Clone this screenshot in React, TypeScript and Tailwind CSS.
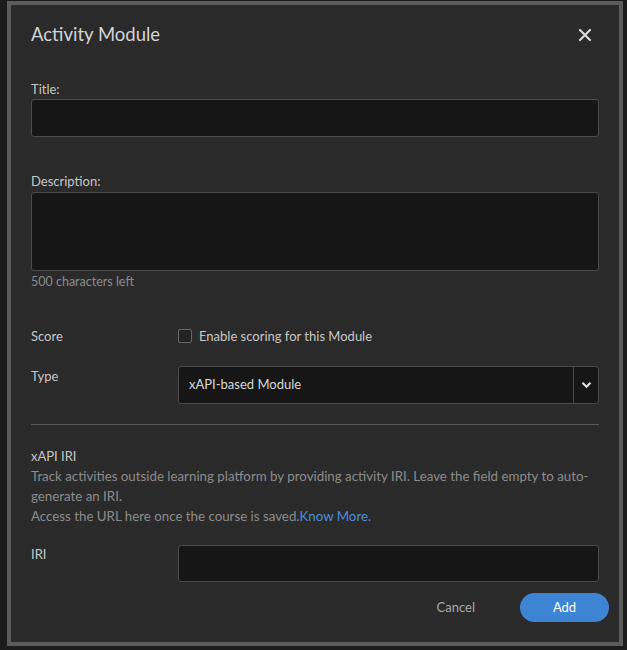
import React, { useState } from 'react';

const font = { fontFamily: 'Lato, "Noto Sans", sans-serif' };

const ActivityModuleDialog = () => {
  const [description, setDescription] = useState('');
  const [scoring, setScoring] = useState(false);

  return (
    <div className="min-h-[650px] w-[627px] bg-[#1b1b1b] pl-[7px] pt-px" style={font}>
      <div className="flex h-[645px] w-[616px] flex-col border-4 border-[#5b5b5b] bg-[#2a2a2a] px-5">
        {/* header */}
        <div className="mt-[16px] flex h-[28px] items-center justify-between">
          <h2 className="text-[18.5px] text-[#d4d4d4]">Activity Module</h2>
          <button className="mr-[7px] text-[#d8d8d8]">
            <svg width="14" height="14" viewBox="0 0 14 14">
              <path d="M2 2 L12 12 M12 2 L2 12" stroke="currentColor" strokeWidth="2.2" strokeLinecap="round" />
            </svg>
          </button>
        </div>

        {/* title */}
        <label className="mt-[32px] text-[13px] leading-[16px] text-[#c6c6c6]">Title:</label>
        <input className="mt-[2px] h-[38px] w-full rounded-[3px] border border-[#4b4b4b] bg-[#161616] px-3 text-[13px] text-[#ddd] outline-none" />

        {/* description */}
        <label className="mt-[36px] text-[13px] leading-[16px] text-[#c6c6c6]">Description:</label>
        <textarea
          value={description}
          onChange={(e) => setDescription(e.target.value.slice(0, 500))}
          className="mt-[3px] h-[79px] w-full resize-none rounded-[3px] border border-[#4b4b4b] bg-[#161616] px-3 py-2 text-[13px] text-[#ddd] outline-none"
        />
        <p className="mt-[3px] text-[12.5px] leading-[16px] text-[#8a8a8a]">{500 - description.length} characters left</p>

        {/* score */}
        <div className="mt-[38px] flex items-center text-[13px] leading-[16px]">
          <span className="w-[147px] text-[#c6c6c6]">Score</span>
          <label className="flex items-center gap-[7px] text-[#c6c6c6]">
            <span
              onClick={() => setScoring(!scoring)}
              className="h-[14px] w-[14px] rounded-[2px] border border-[#666] bg-[#232323]"
            />
            Enable scoring for this Module
          </label>
        </div>

        {/* type */}
        <div className="mt-[22px] flex items-start text-[13px]">
          <span className="w-[147px] pt-[2px] leading-[16px] text-[#c6c6c6]">Type</span>
          <div className="flex h-[38px] flex-1 items-stretch rounded-[3px] border border-[#4b4b4b] bg-[#161616]">
            <span className="flex flex-1 items-center px-[10px] text-[#d8d8d8]">xAPI-based Module</span>
            <span className="flex w-[25px] items-center justify-center border-l border-[#4b4b4b] text-[#e0e0e0]">
              <svg width="11" height="8" viewBox="0 0 11 8">
                <path d="M1.5 1.8 L5.5 5.8 L9.5 1.8" fill="none" stroke="currentColor" strokeWidth="2.2" />
              </svg>
            </span>
          </div>
        </div>

        <div className="mt-[20px] h-px w-full bg-[#5a5a5a]" />

        {/* xapi iri */}
        <h3 className="mt-[23px] text-[13px] leading-[16px] text-[#c6c6c6]">xAPI IRI</h3>
        <p className="mt-[2px] text-[13.3px] leading-[20px] text-[#8c8c8c]">
          Track activities outside learning platform by providing activity IRI. Leave the field empty to auto-
          <br />
          generate an IRI.
          <br />
          Access the URL here once the course is saved.
          <a className="text-[#4c8fd8]">Know More.</a>
        </p>

        <div className="mt-[19px] flex items-start text-[13px]">
          <span className="w-[147px] pt-[1px] leading-[16px] text-[#c6c6c6]">IRI</span>
          <input className="h-[37px] flex-1 rounded-[3px] border border-[#4b4b4b] bg-[#161616] px-3 text-[#ddd] outline-none" />
        </div>

        {/* footer */}
        <div className="-mr-[10px] mt-[11px] flex items-center justify-end gap-[45px]">
          <button className="text-[13px] text-[#a8a8a8]">Cancel</button>
          <button className="h-[29px] w-[89px] rounded-full bg-[#3d84d4] text-[13px] text-white">Add</button>
        </div>
      </div>
    </div>
  );
};

export default function App() {
  return <ActivityModuleDialog />;
}
